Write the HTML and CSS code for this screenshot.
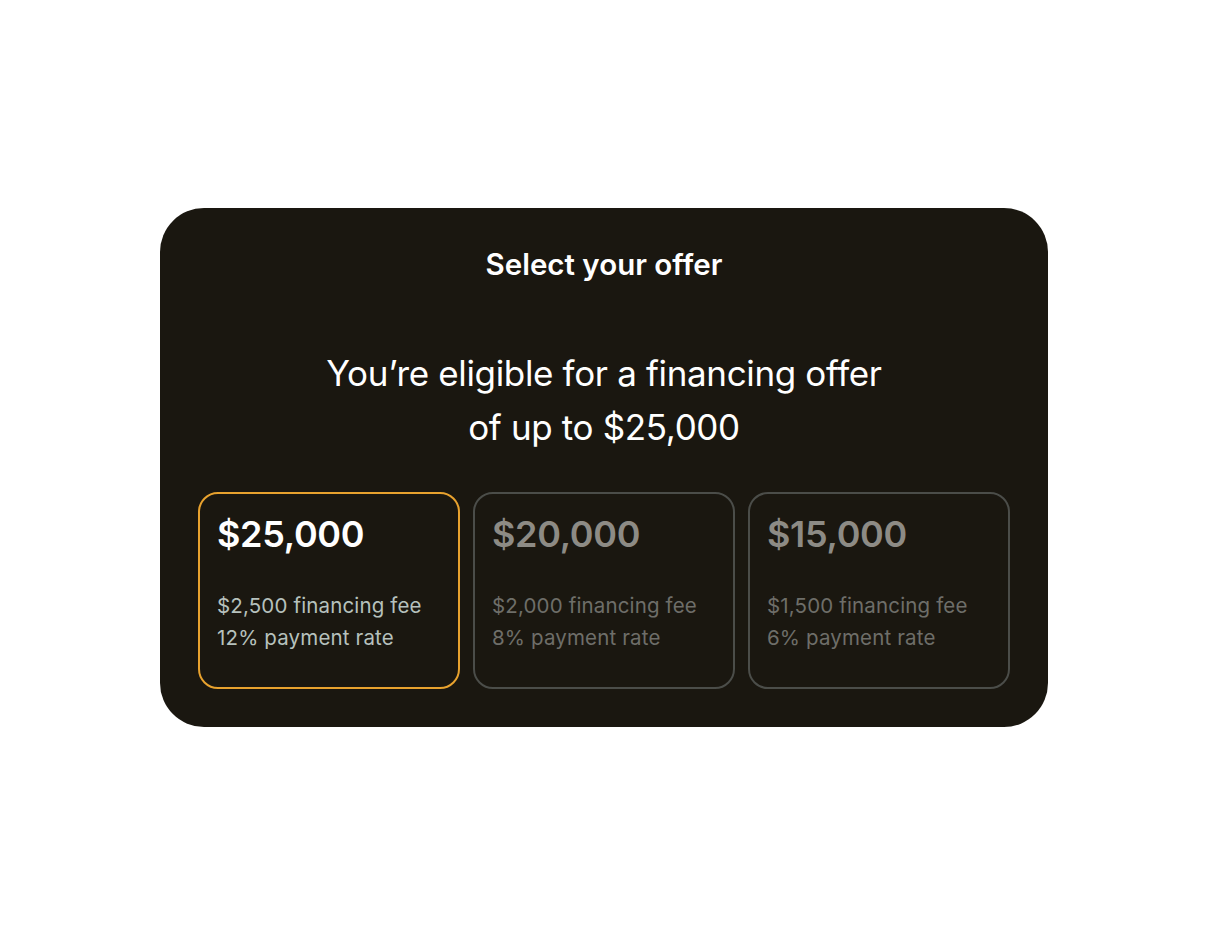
FILE: index.html
```html
<!DOCTYPE html>
<html lang="en">
<head>
<meta charset="utf-8">
<title>Select your offer</title>
<link rel="stylesheet" href="styles.css">
</head>
<body>
<main class="stage">
  <section class="card">
    <h1 class="title">Select your offer</h1>
    <p class="headline">You’re eligible for a financing offer<br>of up to $25,000</p>
    <div class="offers">
      <div class="offer selected">
        <div class="amount">$25,000</div>
        <div class="details">
          <div>$2,500 financing fee</div>
          <div>12% payment rate</div>
        </div>
      </div>
      <div class="offer">
        <div class="amount">$20,000</div>
        <div class="details">
          <div>$2,000 financing fee</div>
          <div>8% payment rate</div>
        </div>
      </div>
      <div class="offer">
        <div class="amount">$15,000</div>
        <div class="details">
          <div>$1,500 financing fee</div>
          <div>6% payment rate</div>
        </div>
      </div>
    </div>
  </section>
</main>
</body>
</html>
```

FILE: styles.css
```css
* { box-sizing: border-box; }
html, body {
  margin: 0;
  padding: 0;
  background: #ffffff;
  font-family: Inter, "Liberation Sans", Arial, sans-serif;
}
.stage {
  width: 1208px;
  height: 936px;
  padding-top: 208px;
  display: flex;
  justify-content: center;
  align-items: flex-start;
}
.card {
  width: 888px;
  height: 519px;
  background: #1a1710;
  border-radius: 44px;
  padding: 36px 38px 38px;
  display: flex;
  flex-direction: column;
  align-items: center;
}
.title {
  margin: 0;
  font-size: 29.5px;
  line-height: 40px;
  font-weight: 600;
  color: #ffffff;
  letter-spacing: 0;
}
.headline {
  margin: 62px 0 0;
  font-size: 35px;
  line-height: 54px;
  font-weight: 400;
  color: #ffffff;
  text-align: center;
  letter-spacing: -0.35px;
}
.offers {
  margin-top: 38px;
  width: 100%;
  display: grid;
  grid-template-columns: repeat(3, 1fr);
  gap: 13px;
}
.offer {
  height: 197px;
  border: 2px solid #4b4d49;
  border-radius: 20px;
  padding: 18px 16px 0 17px;
}
.offer.selected {
  border-color: #e8a22e;
}
.amount {
  font-size: 36px;
  line-height: 44px;
  font-weight: 600;
  color: #8d8b85;
  letter-spacing: -0.3px;
}
.details {
  margin-top: 34px;
  font-size: 20.5px;
  line-height: 32px;
  color: #6e6e69;
  letter-spacing: 0.15px;
}
.selected .amount { color: #ffffff; }
.selected .details { color: #b6c1bd; }
```
